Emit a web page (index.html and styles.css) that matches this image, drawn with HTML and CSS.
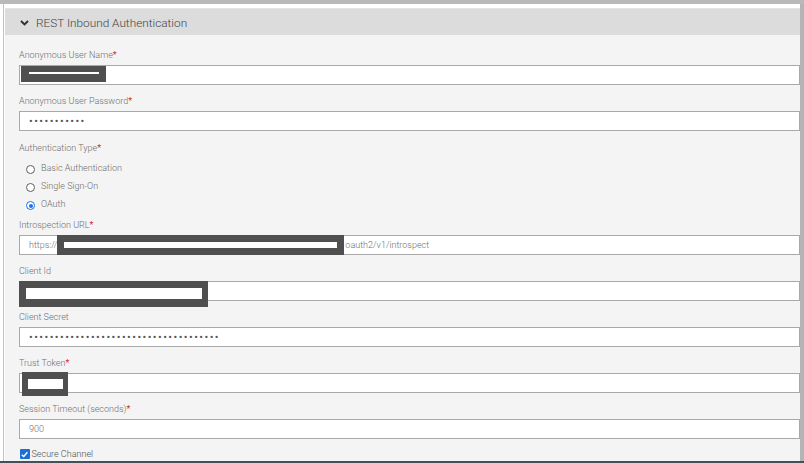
FILE: index.html
```html
<!DOCTYPE html>
<html>
<head>
<meta charset="utf-8">
<link rel="stylesheet" href="styles.css">
</head>
<body>
<div class="page">
  <div class="frame">
    <div class="panel">
      <div class="panel-head">
        <svg class="chev" width="9" height="6" viewBox="0 0 9 6"><path d="M1 1 L4.5 4.5 L8 1" fill="none" stroke="#2f2f2f" stroke-width="1.9"/></svg>
        <span class="title">REST Inbound Authentication</span>
      </div>
      <div class="panel-body">
        <div class="field">
          <div class="label">Anonymous User Name<span class="req">*</span></div>
          <div class="input">
            <span class="redact r1"><span class="bar"></span></span>
          </div>
        </div>
        <div class="field">
          <div class="label">Anonymous User Password<span class="req">*</span></div>
          <div class="input pad"><span class="dots">•••••••••••</span></div>
        </div>
        <div class="group">
          <div class="label">Authentication Type<span class="req">*</span></div>
          <div class="radios">
            <div class="radio"><span class="circle"></span><span class="rtext">Basic Authentication</span></div>
            <div class="radio"><span class="circle"></span><span class="rtext">Single Sign-On</span></div>
            <div class="radio"><span class="circle on"></span><span class="rtext">OAuth</span></div>
          </div>
        </div>
        <div class="field tight">
          <div class="label">Introspection URL<span class="req">*</span></div>
          <div class="input pad">
            <span class="val">https://</span>
            <span class="redact r3"><span class="bar"></span></span>
            <span class="val">oauth2/v1/introspect</span>
          </div>
        </div>
        <div class="field">
          <div class="label">Client Id</div>
          <div class="input">
            <span class="redact r4"><span class="bar"></span></span>
          </div>
        </div>
        <div class="field">
          <div class="label">Client Secret</div>
          <div class="input pad"><span class="dots">•••••••••••••••••••••••••••••••••••••</span></div>
        </div>
        <div class="field">
          <div class="label">Trust Token<span class="req">*</span></div>
          <div class="input">
            <span class="redact r6"><span class="bar"></span></span>
          </div>
        </div>
        <div class="field">
          <div class="label">Session Timeout (seconds)<span class="req">*</span></div>
          <div class="input pad"><span class="val">900</span></div>
        </div>
        <div class="check-row">
          <span class="checkbox"><svg width="10" height="10" viewBox="0 0 10 10"><path d="M2 5.2 L4.2 7.3 L8.2 2.6" fill="none" stroke="#fff" stroke-width="1.6"/></svg></span>
          <span class="ctext">Secure Channel</span>
        </div>
      </div>
    </div>
  </div>
</div>
</body>
</html>
```
FILE: styles.css
```css
* { box-sizing: border-box; }
html, body { margin: 0; padding: 0; background: #ffffff; }
body { font-family: Roboto, "Liberation Sans", sans-serif; font-weight: 300; }

.page {
  width: 804px;
  height: 463px;
  border-top: 4px solid #b9b9b9;
  border-bottom: 2px solid #46505a;
  display: flex;
  flex-direction: column;
  overflow: hidden;
}
.frame {
  flex: 1;
  margin-left: 3px;
  border-left: 1px solid #c2c2c2;
  border-right: 4px solid #b4b4b4;
  padding: 4px 0 0 1px;
  overflow: hidden;
  display: flex;
  flex-direction: column;
}
.panel {
  flex: 1;
  display: flex;
  flex-direction: column;
  background: #f4f4f4;
}
.panel-head {
  height: 27px;
  background: #dcdcdc;
  border-top: 1px solid #e4e4e4;
  display: flex;
  align-items: center;
  padding-left: 15px;
  padding-top: 2px;
}
.chev { margin-right: 7px; }
.title {
  font-size: 11.8px;
  color: #444444;
  font-weight: 300;
}
.panel-body {
  flex: 1;
  padding: 4px 0 0 14px;
}
.field { margin-top: 10px; }
.field.tight { margin-top: 6px; }
.label {
  font-size: 9px;
  line-height: 12px;
  height: 12px;
  color: #6f6f6f;
  margin-bottom: 4px;
  white-space: nowrap;
}
.req { color: #d42a2a; font-weight: 400; }
.input {
  height: 20px;
  background: #ffffff;
  border: 1px solid #a9a9a9;
  display: flex;
  align-items: center;
}
.input.pad { padding-left: 9px; }
.val { font-size: 9px; color: #707070; white-space: nowrap; }
.dots {
  font-size: 11px;
  font-weight: 400;
  color: #555555;
  letter-spacing: 1.45px;
  white-space: nowrap;
  margin-top: 1px;
}
.redact {
  background: #4f4f4f;
  display: flex;
  flex-shrink: 0;
}
.bar { display: block; background: #ffffff; }
.r1 { width: 85px; height: 16px; margin-left: 1px; align-self: flex-start; padding: 5.5px 7px 0 7.5px; }
.r1 .bar { height: 2.5px; width: 70px; }
.r3 { width: 287px; height: 20px; margin: 0 1px 0 0; padding: 7px 7px 0 7px; }
.r3 .bar { height: 6px; width: 273px; }
.r4 { width: 189px; height: 26px; margin-left: -1px; align-self: flex-start; margin-top: -1px; padding: 7px 6px 0 7px; }
.r4 .bar { height: 11px; width: 176px; }
.r6 { width: 46px; height: 24px; margin-left: 2px; align-self: flex-start; margin-top: -2px; padding: 6.5px 5px 0 6px; }
.r6 .bar { height: 10.5px; width: 35px; }

.group { margin-top: 11px; }
.group .label { margin-bottom: 5px; }
.radios { display: flex; flex-direction: column; }
.radio {
  height: 18px;
  display: flex;
  align-items: center;
  padding-left: 7px;
}
.circle {
  width: 9px;
  height: 9px;
  border-radius: 50%;
  border: 1.3px solid #5e5e5e;
  background: #ffffff;
  margin-right: 6px;
  margin-top: 3px;
  flex-shrink: 0;
  display: flex;
  align-items: center;
  justify-content: center;
}
.circle.on { border-color: #1a73e8; }
.circle.on::after {
  content: "";
  width: 4px;
  height: 4px;
  border-radius: 50%;
  background: #1a73e8;
}
.rtext { font-size: 9px; color: #6f6f6f; white-space: nowrap; }

.check-row {
  margin-top: 8px;
  height: 14px;
  display: flex;
  align-items: center;
  padding-left: 1px;
}
.checkbox {
  width: 9.5px;
  height: 9.5px;
  background: #1b6fd6;
  border-radius: 1px;
  display: flex;
  align-items: center;
  justify-content: center;
  margin-right: 2px;
}
.checkbox svg { width: 9px; height: 9px; }
.ctext { font-size: 9px; color: #4f4f4f; }
```
